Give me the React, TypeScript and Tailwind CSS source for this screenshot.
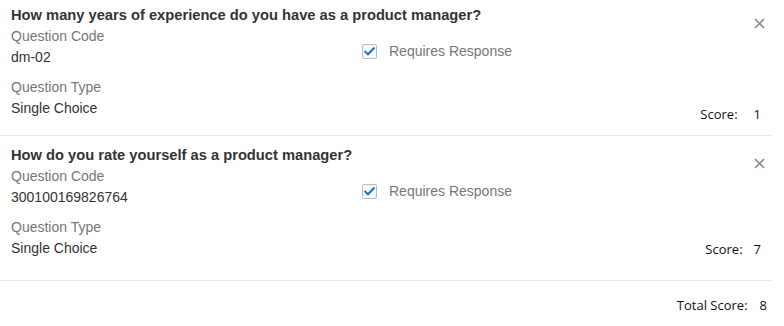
import React from 'react';

interface Question {
  title: string;
  code: string;
  type: string;
  score: number;
}

const questions: Question[] = [
  { title: 'How many years of experience do you have as a product manager?', code: 'dm-02', type: 'Single Choice', score: 1 },
  { title: 'How do you rate yourself as a product manager?', code: '300100169826764', type: 'Single Choice', score: 7 },
];

// per-card tweaks so the rows land where the reference puts them
const cardStyles = [
  { card: 'h-[136px] pt-[5px]', score: 'mb-[11px] gap-[16px]' },
  { card: 'h-[145px] pt-[9px]', score: 'mb-[21px] gap-[11px]' },
];

const CheckIcon = () => (
  <span className="flex h-[15px] w-[15px] shrink-0 items-center justify-center rounded-[2px] border border-[#b4bcc8] bg-[#f7f9fc]">
    <svg width="11" height="9" viewBox="0 0 11 9" fill="none">
      <path d="M1.2 4.6 L4 7.3 L9.8 1.3" stroke="#1b6ec2" strokeWidth="2" strokeLinecap="square" />
    </svg>
  </span>
);

const CloseIcon = () => (
  <svg width="11" height="11" viewBox="0 0 11 11" fill="none">
    <path d="M1 1 L10 10 M10 1 L1 10" stroke="#8a8a8a" strokeWidth="1.6" />
  </svg>
);

const App: React.FC = () => {
  const total = questions.reduce((acc, q) => acc + q.score, 0);

  return (
    <div className="h-[326px] w-[784px] bg-white font-['Liberation_Sans',Arial,sans-serif] text-[14px]">
      <div className="w-[772px]">
        {questions.map((q, idx) => (
          <div key={idx} className={`flex border-b border-[#e8e8e8] pl-[11px] ${cardStyles[idx].card}`}>
            {/* Left: question info */}
            <div className="w-[351px] shrink-0 whitespace-nowrap leading-[21px]">
              <h3 className="text-[14.7px] font-bold text-[#333]">{q.title}</h3>
              <div className="text-[#777]">Question Code</div>
              <div className="text-[#333]">{q.code}</div>
              <div className="mt-[9px] text-[#777]">Question Type</div>
              <div className="text-[#333]">{q.type}</div>
            </div>

            {/* Middle: requires response */}
            <div className="w-[200px] shrink-0 whitespace-nowrap">
              <div className="mt-[36px] flex items-center gap-[12px] leading-[20px]">
                <CheckIcon />
                <span className="text-[#777]">Requires Response</span>
              </div>
            </div>

            {/* Right: close + score */}
            <div className="flex flex-1 flex-col items-end">
              <div className="mr-[7px] mt-[13px]">
                <CloseIcon />
              </div>
              <div className={`mt-auto mr-[11px] flex items-center font-['Open_Sans',sans-serif] text-[13px] leading-[20px] text-[#111] ${cardStyles[idx].score}`}>
                <span>Score:</span>
                <span>{q.score}</span>
              </div>
            </div>
          </div>
        ))}

        <div className="flex justify-end gap-[12px] pr-[5px] pt-[14px] font-['Open_Sans',sans-serif] text-[13px] leading-[20px] text-[#111]">
          <span>Total Score:</span>
          <span>{total}</span>
        </div>
      </div>
    </div>
  );
};

export default App;
